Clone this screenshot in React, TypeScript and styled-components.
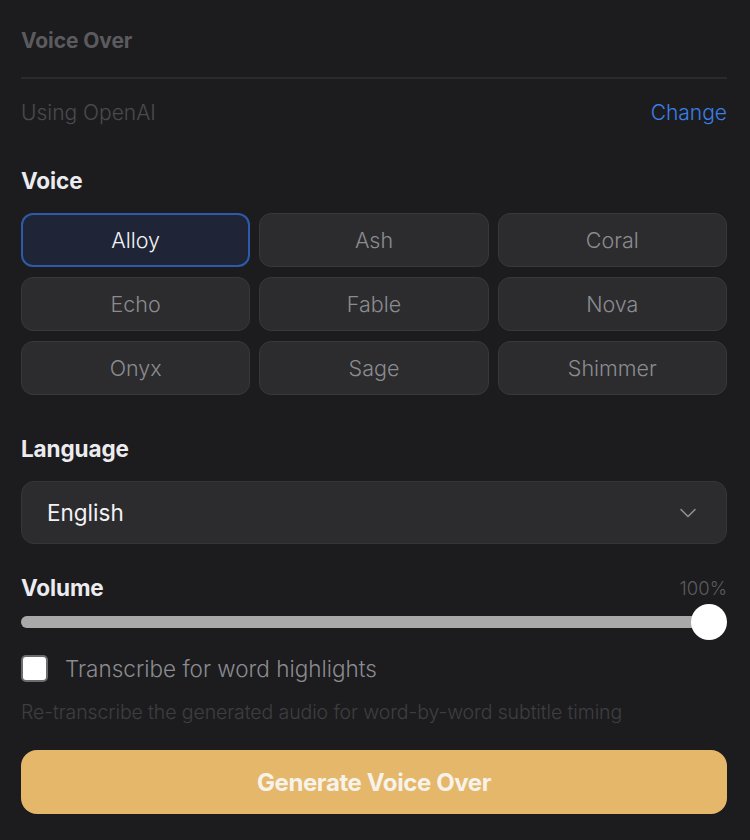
import React, { useState } from "react";
import styled, { createGlobalStyle, css } from "styled-components";

const GlobalStyle = createGlobalStyle`
    html, body {
        margin: 0;
        padding: 0;
        background: #1c1c1e;
    }
    body {
        font-family: Inter, "Noto Sans", sans-serif;
        -webkit-font-smoothing: antialiased;
    }
`;

const VOICES = ["Alloy", "Ash", "Coral", "Echo", "Fable", "Nova", "Onyx", "Sage", "Shimmer"];

const App = () => {
    const [voice, setVoice] = useState("Alloy");
    const [transcribe, setTranscribe] = useState(false);
    const volume = 100;

    return (
        <>
            <GlobalStyle />
            <Panel>
                <Title>Voice Over</Title>
                <Divider />
                <ProviderRow>
                    <Provider>Using OpenAI</Provider>
                    <ChangeLink>Change</ChangeLink>
                </ProviderRow>

                <SectionLabel>Voice</SectionLabel>
                <VoiceGrid>
                    {VOICES.map((v) => (
                        <VoiceButton key={v} active={v === voice} onClick={() => setVoice(v)}>
                            {v}
                        </VoiceButton>
                    ))}
                </VoiceGrid>

                <SectionLabel $top={40}>Language</SectionLabel>
                <Select>
                    <span>English</span>
                    <svg width="28" height="28" viewBox="0 0 24 24" fill="none" stroke="#8e8e93" strokeWidth="1.4" strokeLinecap="round" strokeLinejoin="round">
                        <path d="M6 9l6 6 6-6" />
                    </svg>
                </Select>

                <VolumeHead>
                    <SectionLabel $top={0}>Volume</SectionLabel>
                    <Percent>{volume}%</Percent>
                </VolumeHead>
                <Track>
                    <Fill style={{ width: `calc(${volume}% - 18px)` }} />
                    <Thumb style={{ left: `calc(${volume}% - 36px)` }} />
                </Track>

                <CheckRow onClick={() => setTranscribe(!transcribe)}>
                    <CheckBox checked={transcribe} />
                    <CheckLabel>Transcribe for word highlights</CheckLabel>
                </CheckRow>
                <Hint>Re-transcribe the generated audio for word-by-word subtitle timing</Hint>

                <GenerateButton>Generate Voice Over</GenerateButton>
            </Panel>
        </>
    );
};

const Panel = styled.div`
    display: flex;
    flex-direction: column;
    padding: 27px 23px 30px 21px;
    width: 750px;
    box-sizing: border-box;
    min-height: 840px;
    background: #1c1c1e;
`;

const Title = styled.div`
    font-size: 21px;
    font-weight: 700;
    color: #5b5b5f;
    letter-spacing: -0.1px;
    line-height: 28px;
`;

const Divider = styled.div`
    height: 2px;
    background: #2a2a2d;
    margin-top: 22px;
`;

const ProviderRow = styled.div`
    display: flex;
    justify-content: space-between;
    align-items: center;
    margin-top: 20px;
    font-size: 21px;
    font-weight: 300;
    line-height: 28px;
`;

const Provider = styled.span`
    color: #4a4a4d;
`;

const ChangeLink = styled.span`
    color: #3b7fe6;
    cursor: pointer;
`;

const SectionLabel = styled.div<{ $top?: number }>`
    font-size: 22.5px;
    font-weight: 700;
    color: #ececf0;
    line-height: 28px;
    letter-spacing: -0.1px;
    margin-top: ${(p) => (p.$top === undefined ? 40 : p.$top)}px;
`;

const VoiceGrid = styled.div`
    display: grid;
    grid-template-columns: repeat(3, 1fr);
    gap: 10px 9px;
    margin-top: 18px;
`;

const VoiceButton = styled.button<{ active: boolean }>`
    height: 54px;
    border-radius: 12px;
    border: 1.5px solid #38383b;
    background: #2c2c2e;
    color: #8b8b90;
    font-family: inherit;
    font-size: 21.5px;
    font-weight: 300;
    cursor: pointer;
    ${(p) =>
        p.active &&
        css`
            background: #1f2537;
            border: 2px solid #2d5bab;
            color: #f2f2f5;
        `}
`;

const Select = styled.div`
    display: flex;
    align-items: center;
    justify-content: space-between;
    height: 63px;
    box-sizing: border-box;
    margin-top: 18px;
    padding: 0 24px 0 25px;
    border-radius: 13px;
    border: 1.5px solid #363639;
    background: #2c2c2e;
    color: #f2f2f5;
    font-size: 22.5px;
`;

const VolumeHead = styled.div`
    display: flex;
    justify-content: space-between;
    align-items: center;
    margin-top: 30px;
`;

const Percent = styled.span`
    font-size: 18.5px;
    font-weight: 300;
    color: #5b5b5f;
`;

const Track = styled.div`
    position: relative;
    height: 12px;
    margin-top: 14px;
    border-radius: 6px;
    background: #3a3a3c;
`;

const Fill = styled.div`
    height: 100%;
    border-radius: 6px;
    background: #a9a9a9;
`;

const Thumb = styled.div`
    position: absolute;
    top: -12px;
    width: 36px;
    height: 36px;
    border-radius: 50%;
    background: #ffffff;
`;

const CheckRow = styled.div`
    display: flex;
    align-items: center;
    gap: 17px;
    margin-top: 27px;
    cursor: pointer;
`;

const CheckBox = styled.div<{ checked: boolean }>`
    width: 27px;
    height: 27px;
    box-sizing: border-box;
    border-radius: 5px;
    border: 2px solid #6b6b70;
    background: ${(p) => (p.checked ? "#3b7fe6" : "#ffffff")};
`;

const CheckLabel = styled.span`
    font-size: 22.5px;
    font-weight: 300;
    color: #8b8b90;
`;

const Hint = styled.div`
    margin-top: 18px;
    font-size: 19.5px;
    font-weight: 300;
    color: #3e3e41;
    letter-spacing: -0.1px;
`;

const GenerateButton = styled.button`
    margin-top: 26px;
    height: 64px;
    border: none;
    border-radius: 16px;
    background: #e5b76a;
    color: #f7f2ea;
    font-family: inherit;
    font-size: 24px;
    font-weight: 700;
    letter-spacing: -0.4px;
    cursor: pointer;
`;

export default App;
